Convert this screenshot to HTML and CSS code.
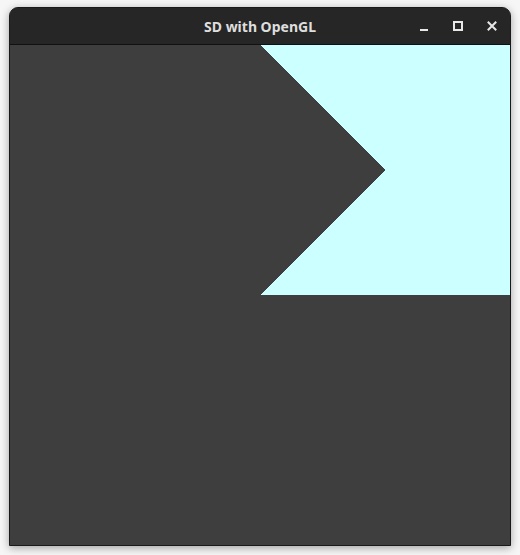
FILE: index.html
```html
<!DOCTYPE html>
<html>
<head>
<meta charset="utf-8">
<link rel="stylesheet" href="styles.css">
</head>
<body>
<div class="window">
  <div class="titlebar">
    <div class="title">SD with OpenGL</div>
    <div class="controls">
      <button class="ctl" aria-label="Minimize">
        <svg width="16" height="16" viewBox="0 0 16 16"><rect x="4" y="11" width="8" height="2" fill="#e8e8e8"/></svg>
      </button>
      <button class="ctl" aria-label="Maximize">
        <svg width="16" height="16" viewBox="0 0 16 16"><rect x="4" y="4" width="8" height="8" fill="none" stroke="#e8e8e8" stroke-width="2"/></svg>
      </button>
      <button class="ctl" aria-label="Close">
        <svg width="16" height="16" viewBox="0 0 16 16"><path d="M4.5 4.5 L11.5 11.5 M11.5 4.5 L4.5 11.5" stroke="#e8e8e8" stroke-width="2" stroke-linecap="square"/></svg>
      </button>
    </div>
  </div>
  <div class="content">
    <svg class="canvas" width="500" height="500" viewBox="0 0 500 500" shape-rendering="crispEdges">
      <rect width="500" height="500" fill="#3e3e3e"/>
      <polygon points="250,0 500,0 500,250 250,250 375,125" fill="#ccffff"/>
    </svg>
  </div>
</div>
</body>
</html>
```
FILE: styles.css
```css
html, body {
  margin: 0;
  padding: 0;
  background: #f6f6f6;
}
body {
  padding: 7px 0 0 9px;
  height: 548px;
  overflow: hidden;
}
.window {
  width: 500px;
  border: 1px solid #1a1a1a;
  border-radius: 9px 9px 0 0;
  overflow: hidden;
  box-shadow: 0 2px 8px rgba(0, 0, 0, 0.35);
  background: #3e3e3e;
}
.titlebar {
  height: 36px;
  background: #262626;
  border-bottom: 1px solid #111111;
  display: flex;
  align-items: center;
  justify-content: center;
  position: relative;
}
.title {
  font-family: "Noto Sans", "Open Sans", sans-serif;
  font-weight: 700;
  font-size: 14px;
  color: #dedede;
}
.controls {
  position: absolute;
  right: 6px;
  top: 0;
  height: 36px;
  display: flex;
  align-items: center;
  gap: 10px;
}
.ctl {
  width: 24px;
  height: 24px;
  padding: 0;
  border: none;
  background: transparent;
  display: flex;
  align-items: center;
  justify-content: center;
}
.content {
  height: 500px;
}
.canvas {
  display: block;
}
```
